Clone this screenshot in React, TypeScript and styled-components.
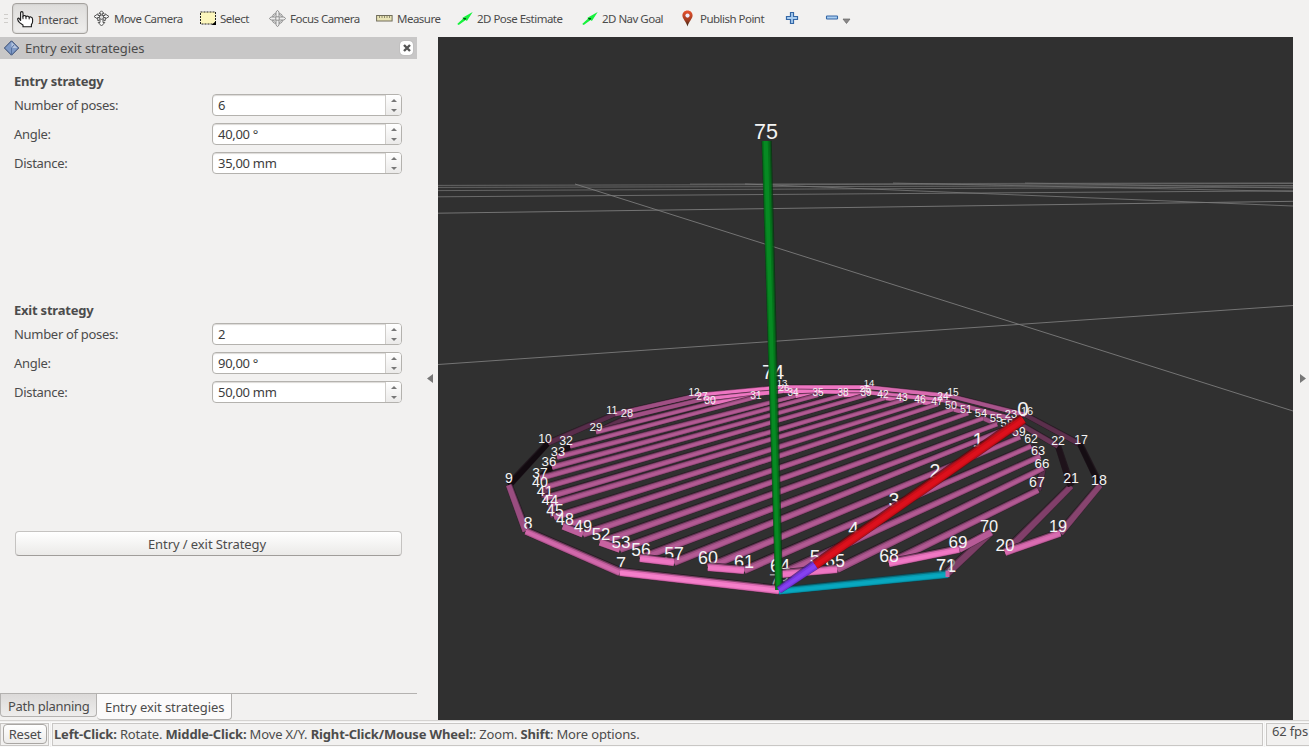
import React from "react";
import styled, { createGlobalStyle } from "styled-components";

const GlobalStyle = createGlobalStyle`
  * { box-sizing: border-box; }
  html, body { margin: 0; padding: 0; overflow: hidden; }
  body { background: #f2f1f0; color: #4c4c4c; font: 13px "Noto Sans", sans-serif; letter-spacing: -0.2px; }
  svg { display: block; flex: none; }
`;

const Window = styled.div`
  width: 1309px;
  height: 747px;
  display: flex;
  flex-direction: column;
  background: #f2f1f0;
  overflow: hidden;
`;

const Toolbar = styled.div`
  height: 37px;
  flex: none;
  display: flex;
  align-items: flex-start;
  padding: 3px 0 0 4px;
`;

const Grip = styled.div`
  width: 8px;
  height: 31px;
  display: flex;
  flex-direction: column;
  justify-content: center;
  gap: 3px;
  span { width: 4px; height: 1px; background: #cfcdca; }
`;

const Tool = styled.div<{ $w: number; $active?: boolean }>`
  width: ${(p) => p.$w}px;
  height: 31px;
  flex: none;
  display: flex;
  align-items: center;
  gap: 4px;
  padding: ${(p) => (p.$active ? "1px 0 0 4px" : "0 0 1px 4px")};
  border: 1px solid ${(p) => (p.$active ? "#a5a29e" : "transparent")};
  border-radius: 4px;
  background: ${(p) => (p.$active ? "linear-gradient(#dedddb, #efeeed)" : "none")};
  box-shadow: ${(p) => (p.$active ? "inset 0 0 2px #bbb" : "none")};
  font-size: 11.5px;
  letter-spacing: ${(p) => (p.$active ? -0.3 : -0.52)}px;
  white-space: nowrap;
`;

const Main = styled.div`
  flex: none;
  height: 683px;
  display: flex;
`;

const Dock = styled.div`
  width: 417px;
  display: flex;
  flex-direction: column;
`;

const DockTitle = styled.div`
  height: 22px;
  display: flex;
  align-items: center;
  gap: 5px;
  padding: 0 4px 0 4px;
  background: #c8c7c7;
  letter-spacing: -0.07px;
  margin-bottom: 10px;
`;

const CloseButton = styled.div`
  margin-left: auto;
  width: 13px;
  height: 14px;
  border-radius: 4px;
  background: #fff;
  display: grid;
  place-items: center;
  box-shadow: 0 0 1px #888;
`;

const Form = styled.div<{ $h: number }>`
  height: ${(p) => p.$h}px;
  padding: 0 15px 0 14px;
`;

const Heading = styled.div`
  height: 25px;
  line-height: 24px;
  font-weight: 700;
  letter-spacing: -0.22px;
`;

const Row = styled.div`
  height: 29px;
  display: flex;
  align-items: flex-start;
  line-height: 23px;
  letter-spacing: -0.3px;
`;

const RowLabel = styled.div`
  width: 198px;
`;

const SpinBox = styled.div`
  width: 190px;
  height: 22px;
  display: flex;
  border: 1px solid #b4b2ae;
  border-radius: 4px;
  background: #fff;
  box-shadow: inset 0 1px 1px #dcdad8;
  overflow: hidden;
  color: #3c3c3c;
  line-height: 21px;
`;

const SpinText = styled.div`
  flex: 1;
  padding-left: 5px;
`;

const SpinButtons = styled.div`
  width: 16px;
  border-left: 1px solid #cfcdca;
  background: linear-gradient(#fff, #ebeae9);
  display: flex;
  flex-direction: column;
  align-items: center;
  justify-content: space-between;
  padding: 4px 0 3px;
`;

const PushButton = styled.div`
  width: 387px;
  height: 25px;
  margin: 1px 0 0 1px;
  border: 1px solid #c5c3c1;
  border-bottom-color: #a09d9a;
  border-radius: 4px;
  background: linear-gradient(#fff, #ebeae8);
  text-align: center;
  line-height: 24px;
  letter-spacing: -0.08px;
  padding-right: 3px;
`;

const Tabs = styled.div`
  margin-top: auto;
  height: 27px;
  border-top: 1px solid #b4b2b0;
  display: flex;
  align-items: flex-start;
`;

const Tab = styled.div<{ $w: number; $active?: boolean; $ls: number }>`
  width: ${(p) => p.$w}px;
  height: ${(p) => (p.$active ? 26 : 23)}px;
  line-height: ${(p) => (p.$active ? 26 : 24)}px;
  padding-left: ${(p) => (p.$active ? 8 : 7)}px;
  letter-spacing: ${(p) => p.$ls}px;
  border: 1px solid #b4b2b0;
  border-top: 0;
  border-left-width: ${(p) => (p.$active ? 0 : 1)}px;
  border-radius: 0 0 4px 4px;
  background: ${(p) => (p.$active ? "#fbfafa" : "linear-gradient(#dcdad9, #eeedec)")};
  white-space: nowrap;
`;

const Splitter = styled.div<{ $w: number; $pad: number }>`
  width: ${(p) => p.$w}px;
  padding: 337px 0 0 ${(p) => p.$pad}px;
`;

const Viewport = styled.div`
  width: 855px;
  height: 683px;
  background: #303030;
`;

const StatusBar = styled.div`
  height: 27px;
  display: flex;
  gap: 3px;
  padding-top: 2px;
  border-top: 1px solid #d5d3d1;
`;

const StatusCell = styled.div<{ $w: number; $lh?: number; $pad?: number }>`
  width: ${(p) => p.$w}px;
  height: 23px;
  flex: none;
  border: 1px solid #c9c7c5;
  box-shadow: 0 0 0 1px #fafafa;
  padding-left: ${(p) => p.$pad ?? 2}px;
  line-height: ${(p) => p.$lh ?? 20}px;
  white-space: nowrap;
  letter-spacing: -0.155px;
`;

const ResetButton = styled.div`
  width: 44px;
  height: 20px;
  border: 1px solid #a9a6a3;
  border-radius: 4px;
  background: linear-gradient(#fff, #ecebea);
  line-height: 18px;
  text-align: center;
  letter-spacing: -0.2px;
`;

/* ---------- icons ---------- */

const HandIcon = () => (
  <svg width="17" height="17" viewBox="0 0 17 17">
    <path d="M3.6 9.8V2Q3.6.6 4.8.6 6 .6 6 2V5.2Q6.6 4.3 7.8 4.6 8.8 4.8 9 5.7 9.8 4.9 10.9 5.2 12 5.5 12.2 6.4 13 5.6 14 6 15.6 6.5 15.6 8.5V10.5Q15.6 12.3 14.4 13.5V15.8H6V14L2.6 11.6Q1 10.2.7 8.3.6 7 1.7 7.1 2.6 7.3 3.6 9.8Z" fill="#fff" stroke="#1a1a1a" strokeWidth="1.1" />
    <path d="M6 5v3.2M9 5.7v2.5M12.2 6.4v2" stroke="#1a1a1a" strokeWidth="1" />
  </svg>
);

const MoveIcon = () => (
  <svg width="17" height="17" viewBox="0 0 17 17" fill="#f8f8f8" stroke="#555" strokeWidth="1">
    <path d="M8.5.8 11 3.4H9.3V5.5H12V3.8L16 6.5 12 9.2V7.5H5V9.2L1 6.5 5 3.8V5.5H7.7V3.4H6Z" />
    <path d="M8.5 16 5.2 12.5H7V9.5L5 11 4.6 7.5H12.4L12 11 10 9.5V12.5H11.8Z" />
    <circle cx="8.5" cy="7.2" r="2.2" fill="#ddd" />
  </svg>
);

const SelectIcon = () => (
  <svg width="16" height="14" viewBox="0 0 16 14">
    <rect x=".5" y="1" width="15" height="12" fill="#fcf6bd" stroke="#222" strokeDasharray="2 1" />
    <path d="M16 10V14H11.5Z" fill="#000" />
  </svg>
);

const FocusIcon = () => (
  <svg width="17" height="17" viewBox="0 0 17 17" fill="none" stroke="#888">
    <circle cx="8.5" cy="8.5" r="5" strokeWidth="2" />
    <circle cx="8.5" cy="8.5" r="5" stroke="#eee" strokeWidth=".7" />
    <path d="M8.5.3 10 2V6.8H7V2ZM8.5 16.7 7 15V10.2H10V15ZM.3 8.5 2 7H6.8V10H2ZM16.7 8.5 15 10H10.2V7H15Z" fill="#eee" strokeWidth=".9" />
  </svg>
);

const MeasureIcon = () => (
  <svg width="17" height="17" viewBox="0 0 17 17">
    <rect x=".6" y="5.5" width="15.5" height="5.5" fill="#e9e4b6" stroke="#706d5b" />
    <path d="M3.5 6v2M6 6v2M8.5 6v2M11 6v2M13.5 6v2" stroke="#77735a" strokeWidth=".8" />
  </svg>
);

const ArrowIcon = () => (
  <svg width="16" height="17" viewBox="0 0 16 17">
    <path d="M.2 13.9 5.9 8.7 5.5 7.7 15.7 1.9 9.9 11.1 8.7 9.9 1.7 14.9Z" fill="#16f23c" />
    <path d="M5.9 7.9 9.2 8.1 8.4 9.9 7 9.5Z" fill="#074f17" />
  </svg>
);

const PinIcon = () => (
  <svg width="17" height="17" viewBox="0 0 17 17">
    <defs>
      <linearGradient id="pin" x2="0" y2="1">
        <stop offset="0" stopColor="#e9532f" />
        <stop offset=".6" stopColor="#a23c21" />
        <stop offset="1" stopColor="#2f2613" />
      </linearGradient>
    </defs>
    <path d="M8.5.5C5.4.5 3.4 2.8 3.4 5.6 3.4 8.8 7.3 11.8 8.5 16.5 9.7 11.8 13.6 8.8 13.6 5.6 13.6 2.8 11.6.5 8.5.5Z" fill="url(#pin)" />
    <circle cx="8.5" cy="5.6" r="2.1" fill="#eef" />
  </svg>
);

const PlusIcon = () => (
  <svg width="14" height="14" viewBox="0 0 14 14">
    <path d="M5.5 1.5h3v4h4v3h-4v4h-3v-4h-4v-3h4Z" fill="#a9cdf0" stroke="#3467a6" strokeWidth="1.2" />
  </svg>
);

const MinusIcon = () => (
  <svg width="27" height="14" viewBox="0 0 27 14">
    <rect x="1.5" y="5" width="11" height="3" rx=".6" fill="#a9cdf0" stroke="#3467a6" strokeWidth="1.1" />
    <path d="M18 8h7L21.5 12.5Z" fill="#8a8888" stroke="#666" strokeWidth=".7" />
  </svg>
);

const PanelIcon = () => (
  <svg width="16" height="16" viewBox="0 0 16 16">
    <path d="M7.5.8 14.7 8 7.5 15.2.4 8Z" fill="#7f9ac6" stroke="#31466e" />
    <path d="M7.5 2 13.5 8H7.5Z" fill="#b6c5df" />
    <path d="M7.5 14V8L10 5" stroke="#56719f" fill="none" />
  </svg>
);

const Triangle = ({ d, w, h }: { d: string; w: number; h: number }) => (
  <svg width={w} height={h}><path d={d} fill="#777" /></svg>
);

/* ---------- 3D scene ---------- */

type P = [number, number];

const poses: Record<number, P> = {
  0: [1022, 420], 5: [815, 565], 6: [779, 590], 7: [620, 572], 8: [526, 531], 9: [509, 485], 10: [548, 443],
  11: [615, 414], 12: [698, 395], 13: [782, 387], 14: [868, 387], 15: [951, 396], 16: [1026, 415],
  17: [1080, 444], 18: [1100, 485], 19: [1060, 533], 20: [1005, 552], 21: [1071, 486], 22: [1058, 446],
  23: [1010, 418], 24: [943, 400], 25: [865, 392], 26: [783, 391], 27: [703, 399], 28: [628, 417],
  29: [596, 432], 30: [711, 403], 31: [756, 397], 32: [570, 446], 33: [557, 457], 34: [795, 396],
  35: [818, 395], 36: [552, 467], 37: [540, 478], 38: [843, 395], 39: [866, 395], 40: [545, 487],
  41: [544, 498], 42: [885, 398], 43: [903, 400], 44: [551, 504], 45: [554, 517], 46: [922, 402],
  47: [938, 404], 48: [563, 526], 49: [583, 534], 50: [953, 409], 51: [968, 413], 52: [600, 542],
  53: [620, 549], 54: [983, 418], 55: [997, 424], 56: [640, 558], 57: [674, 562], 58: [1008, 428],
  59: [1020, 437], 60: [708, 567], 61: [744, 570], 62: [1031, 446], 63: [1040, 456], 64: [780, 574],
  65: [837, 569], 66: [1043, 468], 67: [1038, 490], 68: [889, 563], 69: [959, 549], 70: [991, 532],
  71: [947, 573],
};

const HATCH = "#9c4e81";
const BRIGHT = "#ee76c2";

const scale = (y: number) => (y - 185) * 0.0215;

function band(a: P, b: P, wa: number, wb: number, from: number, to: number) {
  const dx = b[0] - a[0];
  const dy = b[1] - a[1];
  const len = Math.hypot(dx, dy);
  let nx = -dy / len;
  let ny = dx / len;
  if (ny < 0) { nx = -nx; ny = -ny; }
  const pt = (p: P, w: number, t: number) => `${(p[0] + nx * w * t).toFixed(2)},${(p[1] + ny * w * t).toFixed(2)}`;
  return [pt(a, wa, from), pt(b, wb, from), pt(b, wb, to), pt(a, wa, to)].join(" ");
}

interface TubeProps { a: P; b: P; color: string; edge?: string; w?: [number, number]; hi?: string }

const Tube = ({ a, b, color, edge = "#20131c", w, hi }: TubeProps) => {
  const [wa, wb] = w ?? [scale(a[1]), scale(b[1])];
  return (
    <g>
      <polygon points={band(a, b, wa, wb, -0.58, 0.55)} fill={edge} fillOpacity="0.75" />
      <polygon points={band(a, b, wa, wb, -0.48, 0.52)} fill={color} fillOpacity="0.5" />
      <polygon points={band(a, b, wa, wb, -0.34, 0.46)} fill={color} />
      {hi && <polygon points={band(a, b, wa, wb, -0.14, 0.32)} fill={hi} />}
    </g>
  );
};

const link = (i: number, j: number, color: string, hi?: string) => (
  <Tube key={`${i}-${j}`} a={poses[i]} b={poses[j]} color={color} hi={hi} />
);

const hatchPairs: P[] = [];
for (let i = 29; i <= 67; i += 2) hatchPairs.push([i, i + 1]);

const backLinks: [number, number, string][] = [
  [9, 10, "#120a10"], [10, 11, "#592d4b"], [11, 12, "#a04f84"], [12, 13, BRIGHT], [13, 14, BRIGHT],
  [14, 15, "#d86bb0"], [15, 16, "#a8548b"], [16, 17, "#5b2f4c"], [17, 18, "#150d13"], [18, 19, "#87446f"],
  [20, 21, "#813f6a"], [21, 22, "#1e121a"], [22, 23, "#693657"], [23, 24, "#a8548b"], [24, 25, "#d86bb0"],
  [25, 26, BRIGHT], [26, 27, BRIGHT], [27, 28, "#a04f84"], [28, 29, "#5e304f"],
  [30, 31, "#e873bd"], [32, 33, "#150d13"], [34, 35, "#e873bd"], [36, 37, "#150d13"], [38, 39, "#e873bd"],
  [40, 41, "#6b3759"], [42, 43, "#d86bb0"], [44, 45, "#6b3759"], [46, 47, "#d86bb0"], [50, 51, "#b75b97"],
  [54, 55, "#a04f84"], [58, 59, "#70395c"], [62, 63, "#4c2840"], [66, 67, "#5b2f4c"], [8, 9, "#9a4d80"],
  [70, 71, "#7d3f67"], [69, 70, "#b75b97"],
];

const middleLinks: [number, number, string, string?][] = [
  [48, 49, "#bd5f9c"], [52, 53, "#c8629f"], [68, 69, "#dd6bb3", "#f078c4"], [19, 20, "#c861a2", "#d96cb1"],
];

const frontLinks: [number, number, string, string?][] = [
  [56, 57, "#dd6bb3", "#ee76c2"], [60, 61, "#dd6bb3", "#ee76c2"], [64, 65, "#dd6bb3", "#ee76c2"],
  [7, 8, "#b85a95", "#d168ab"], [6, 7, "#dd6bb3", "#f57fca"],
];

const labels: [string, number, number, number?][] = [
  ["7", 621, 563], ["8", 528, 523.5], ["9", 509, 478], ["10", 545, 439], ["11", 612, 410],
  ["12", 694, 392], ["13", 782, 383], ["14", 869, 383], ["15", 953, 392], ["16", 1027, 411], ["17", 1081, 440],
  ["18", 1099, 480], ["19", 1058, 526], ["20", 1005, 545], ["21", 1071, 478], ["22", 1058, 441],
  ["23", 1011, 414], ["24", 943, 396], ["25", 865, 388], ["26", 784, 387], ["27", 702, 396], ["28", 627, 413],
  ["29", 596, 427], ["30", 710, 400], ["31", 756, 395], ["32", 566, 441], ["33", 558, 451], ["34", 793, 392],
  ["35", 818, 392], ["36", 549, 461], ["37", 540, 473], ["38", 843, 392], ["39", 866, 392], ["40", 540, 482],
  ["41", 545, 491], ["42", 883, 394], ["43", 902, 397], ["44", 550, 500], ["45", 555, 510], ["46", 920, 399],
  ["47", 937, 401], ["48", 565, 519], ["49", 583, 526], ["50", 951, 405], ["51", 966, 409], ["52", 601, 534],
  ["53", 621, 542], ["54", 981, 413], ["55", 996, 418], ["56", 641, 550], ["57", 674, 554], ["58", 1007, 423],
  ["59", 1019, 432], ["60", 708, 558], ["61", 744, 561.5], ["62", 1031, 439], ["63", 1038, 450],
  ["64", 780, 565], ["65", 835, 561], ["66", 1042, 463], ["67", 1037, 482], ["68", 889, 556], ["69", 958, 542],
  ["70", 989, 526], ["72", 946, 565], ["71", 946, 565],
  ["0", 1023, 409, 20.5], ["1", 978, 440, 20], ["2", 935, 471, 19.5], ["3", 894, 500, 19.5],
  ["4", 853.5, 528, 19], ["5", 815, 556, 19], ["75", 766, 131, 21.5], ["74", 773, 372, 20],
];

const gridLines: [number, number, number, number, number][] = [
  [438, 364.5, 1293, 305.5, 0.9], [438, 213.2, 1293, 201.3, 0.9], [438, 196.8, 1293, 190.8, 0.8],
  [438, 190.6, 1293, 187, 0.7], [438, 187.4, 1293, 185.5, 0.7], [438, 185.4, 1293, 183.5, 0.7],
  [690, 184, 1293, 182.8, 0.5],
  [575, 184, 1293, 411, 0.9], [745, 184, 1293, 206, 0.8], [893, 183, 1293, 191.5, 0.7], [1025, 183, 1293, 188, 0.6],
];

const Scene = () => (
  <svg width="855" height="683" viewBox="438 37 855 683">
    {gridLines.map(([x1, y1, x2, y2, o], i) => (
      <line key={i} x1={x1} y1={y1} x2={x2} y2={y2} stroke="#7b7b7b" strokeOpacity={o} strokeWidth="1" />
    ))}
    {backLinks.map(([i, j, c]) => link(i, j, c))}
    {hatchPairs.map(([i, j]) => link(i, j, HATCH, "#b25a93"))}
    {middleLinks.map(([i, j, c, hi]) => link(i, j, c, hi))}
    <g fill="#f4f4f4" fontFamily="Liberation Sans, sans-serif" textAnchor="middle" letterSpacing="0">
      <text x="779" y="587" fontSize="18" fill="#999">73</text>
      {labels.map(([t, x, y, s]) => {
        const size = s ?? (y - 178) * 0.047;
        return (
          <text key={t} x={x} y={y + size * 0.36} fontSize={size} fill={t === "72" ? "#8a8a8a" : undefined}>{t}</text>
        );
      })}
    </g>
    {frontLinks.map(([i, j, c, hi]) => link(i, j, c, hi))}
    <Tube a={[779, 591]} b={[948, 574]} color="#0798ae" hi="#08a8c0" edge="#063d47" w={[7, 7.6]} />
    <path d="M945.5 570.5h4v6.5h-4z" fill="#c666a4" />
    <Tube a={[766.5, 141]} b={[779, 590]} color="#04751b" hi="#078a23" edge="#03360d" w={[9, 7]} />
    <Tube a={[1023, 419]} b={[815, 565]} color="#c90d18" hi="#dc101c" edge="#5c060b" w={[9.5, 9]} />
    <Tube a={[815, 565]} b={[779, 590]} color="#7735df" hi="#8541f0" edge="#3b1a70" w={[9, 7]} />
  </svg>
);

const SpinRow = ({ label, value }: { label: string; value: string }) => (
  <Row>
    <RowLabel>{label}</RowLabel>
    <SpinBox>
      <SpinText>{value}</SpinText>
      <SpinButtons>
        <Triangle w={6} h={3} d="M0 3L3 0L6 3Z" />
        <Triangle w={6} h={3} d="M0 0L3 3L6 0Z" />
      </SpinButtons>
    </SpinBox>
  </Row>
);

export default function App() {
  return (
    <Window>
      <GlobalStyle />
      <Toolbar>
        <Grip><span /><span /><span /></Grip>
        <Tool $w={76} $active><HandIcon />Interact</Tool>
        <Tool $w={107}><MoveIcon />Move Camera</Tool>
        <Tool $w={69}><SelectIcon />Select</Tool>
        <Tool $w={107}><FocusIcon />Focus Camera</Tool>
        <Tool $w={81}><MeasureIcon />Measure</Tool>
        <Tool $w={125}><ArrowIcon />2D Pose Estimate</Tool>
        <Tool $w={97}><ArrowIcon />2D Nav Goal</Tool>
        <Tool $w={106}><PinIcon />Publish Point</Tool>
        <Tool $w={40}><PlusIcon /></Tool>
        <Tool $w={40}><MinusIcon /></Tool>
      </Toolbar>
      <Main>
        <Dock>
          <DockTitle>
            <PanelIcon />
            Entry exit strategies
            <CloseButton>
              <svg width="8" height="8"><path d="M1 1L7 7M7 1L1 7" stroke="#555" strokeWidth="2.4" /></svg>
            </CloseButton>
          </DockTitle>
          <Form $h={229}>
            <Heading>Entry strategy</Heading>
            <SpinRow label="Number of poses:" value="6" />
            <SpinRow label="Angle:" value="40,00 °" />
            <SpinRow label="Distance:" value="35,00 mm" />
          </Form>
          <Form $h={232}>
            <Heading>Exit strategy</Heading>
            <SpinRow label="Number of poses:" value="2" />
            <SpinRow label="Angle:" value="90,00 °" />
            <SpinRow label="Distance:" value="50,00 mm" />
          </Form>
          <Form $h={30}>
            <PushButton>Entry / exit Strategy</PushButton>
          </Form>
          <Tabs>
            <Tab $w={97} $ls={-0.3}>Path planning</Tab>
            <Tab $w={135} $ls={-0.07} $active>Entry exit strategies</Tab>
          </Tabs>
        </Dock>
        <Splitter $w={21} $pad={10}><Triangle w={6} h={9} d="M6 0V9L0 4.5Z" /></Splitter>
        <Viewport><Scene /></Viewport>
        <Splitter $w={16} $pad={7}><Triangle w={6} h={9} d="M0 0V9L6 4.5Z" /></Splitter>
      </Main>
      <StatusBar>
        <StatusCell $w={49}><ResetButton>Reset</ResetButton></StatusCell>
        <StatusCell $w={1211} $pad={1}>
          <b>Left-Click:</b> Rotate. <b>Middle-Click:</b> Move X/Y. <b>Right-Click/Mouse Wheel:</b>: Zoom. <b>Shift</b>: More options.
        </StatusCell>
        <StatusCell $w={50} $pad={5} $lh={14}>62 fps</StatusCell>
      </StatusBar>
    </Window>
  );
}
